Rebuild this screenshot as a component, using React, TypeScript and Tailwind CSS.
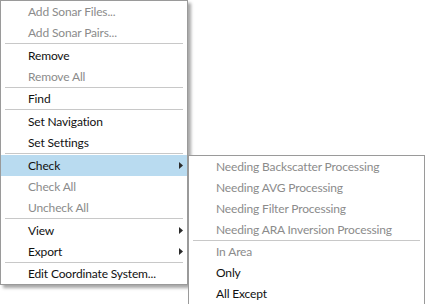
type Entry =
  | { kind: 'item'; label: string; disabled?: boolean; submenu?: boolean; active?: boolean }
  | { kind: 'sep'; h: number }

const mainItems: Entry[] = [
  { kind: 'item', label: 'Add Sonar Files...', disabled: true },
  { kind: 'item', label: 'Add Sonar Pairs...', disabled: true },
  { kind: 'sep', h: 2 },
  { kind: 'item', label: 'Remove' },
  { kind: 'item', label: 'Remove All', disabled: true },
  { kind: 'sep', h: 1 },
  { kind: 'item', label: 'Find' },
  { kind: 'sep', h: 2 },
  { kind: 'item', label: 'Set Navigation' },
  { kind: 'item', label: 'Set Settings' },
  { kind: 'sep', h: 2 },
  { kind: 'item', label: 'Check', submenu: true, active: true },
  { kind: 'item', label: 'Check All', disabled: true },
  { kind: 'item', label: 'Uncheck All', disabled: true },
  { kind: 'sep', h: 2 },
  { kind: 'item', label: 'View', submenu: true },
  { kind: 'item', label: 'Export', submenu: true },
  { kind: 'sep', h: 1 },
  { kind: 'item', label: 'Edit Coordinate System...' },
]

const checkItems: Entry[] = [
  { kind: 'item', label: 'Needing Backscatter Processing', disabled: true },
  { kind: 'item', label: 'Needing AVG Processing', disabled: true },
  { kind: 'item', label: 'Needing Filter Processing', disabled: true },
  { kind: 'item', label: 'Needing ARA Inversion Processing', disabled: true },
  { kind: 'sep', h: 1 },
  { kind: 'item', label: 'In Area', disabled: true },
  { kind: 'item', label: 'Only' },
  { kind: 'item', label: 'All Except' },
]

function Arrow() {
  return (
    <svg width="5" height="7" viewBox="0 0 5 7" className="absolute right-[3px] top-[7px]">
      <path d="M0 0 L4 3.5 L0 7 Z" fill="#2b2b2b" />
    </svg>
  )
}

function MenuList({ items }: { items: Entry[] }) {
  return (
    <div className="flex flex-col">
      {items.map((entry, i) =>
        entry.kind === 'sep' ? (
          <div
            key={i}
            className={`${entry.h === 2 ? 'h-[2px]' : 'h-px'} flex flex-col px-[4px]`}
          >
            <div className="h-px bg-[#c8c8c8]" />
          </div>
        ) : (
          <div
            key={i}
            className={`relative flex h-[21px] items-center pl-[27px] ${
              entry.active ? 'bg-[#b9dbf0]' : ''
            } ${entry.disabled ? 'text-[#8b8b8b]' : 'text-[#111111]'}`}
          >
            <span className="whitespace-nowrap leading-none">{entry.label}</span>
            {entry.submenu ? <Arrow /> : null}
          </div>
        ),
      )}
    </div>
  )
}

export default function App() {
  return (
    <div
      className="relative h-[304px] w-[425px] overflow-hidden bg-white text-[12px] tracking-[-0.15px]"
      style={{ fontFamily: 'Lato, "Liberation Sans", Arial, sans-serif' }}
    >
      <div className="w-[188px] border border-[#9a9a9a] bg-white shadow-[3px_3px_3px_rgba(0,0,0,0.35)]">
        <MenuList items={mainItems} />
      </div>

      <div className="absolute left-[188px] top-[155px] w-[237px] border border-[#9a9a9a] bg-white">
        <MenuList items={checkItems} />
      </div>
    </div>
  )
}
